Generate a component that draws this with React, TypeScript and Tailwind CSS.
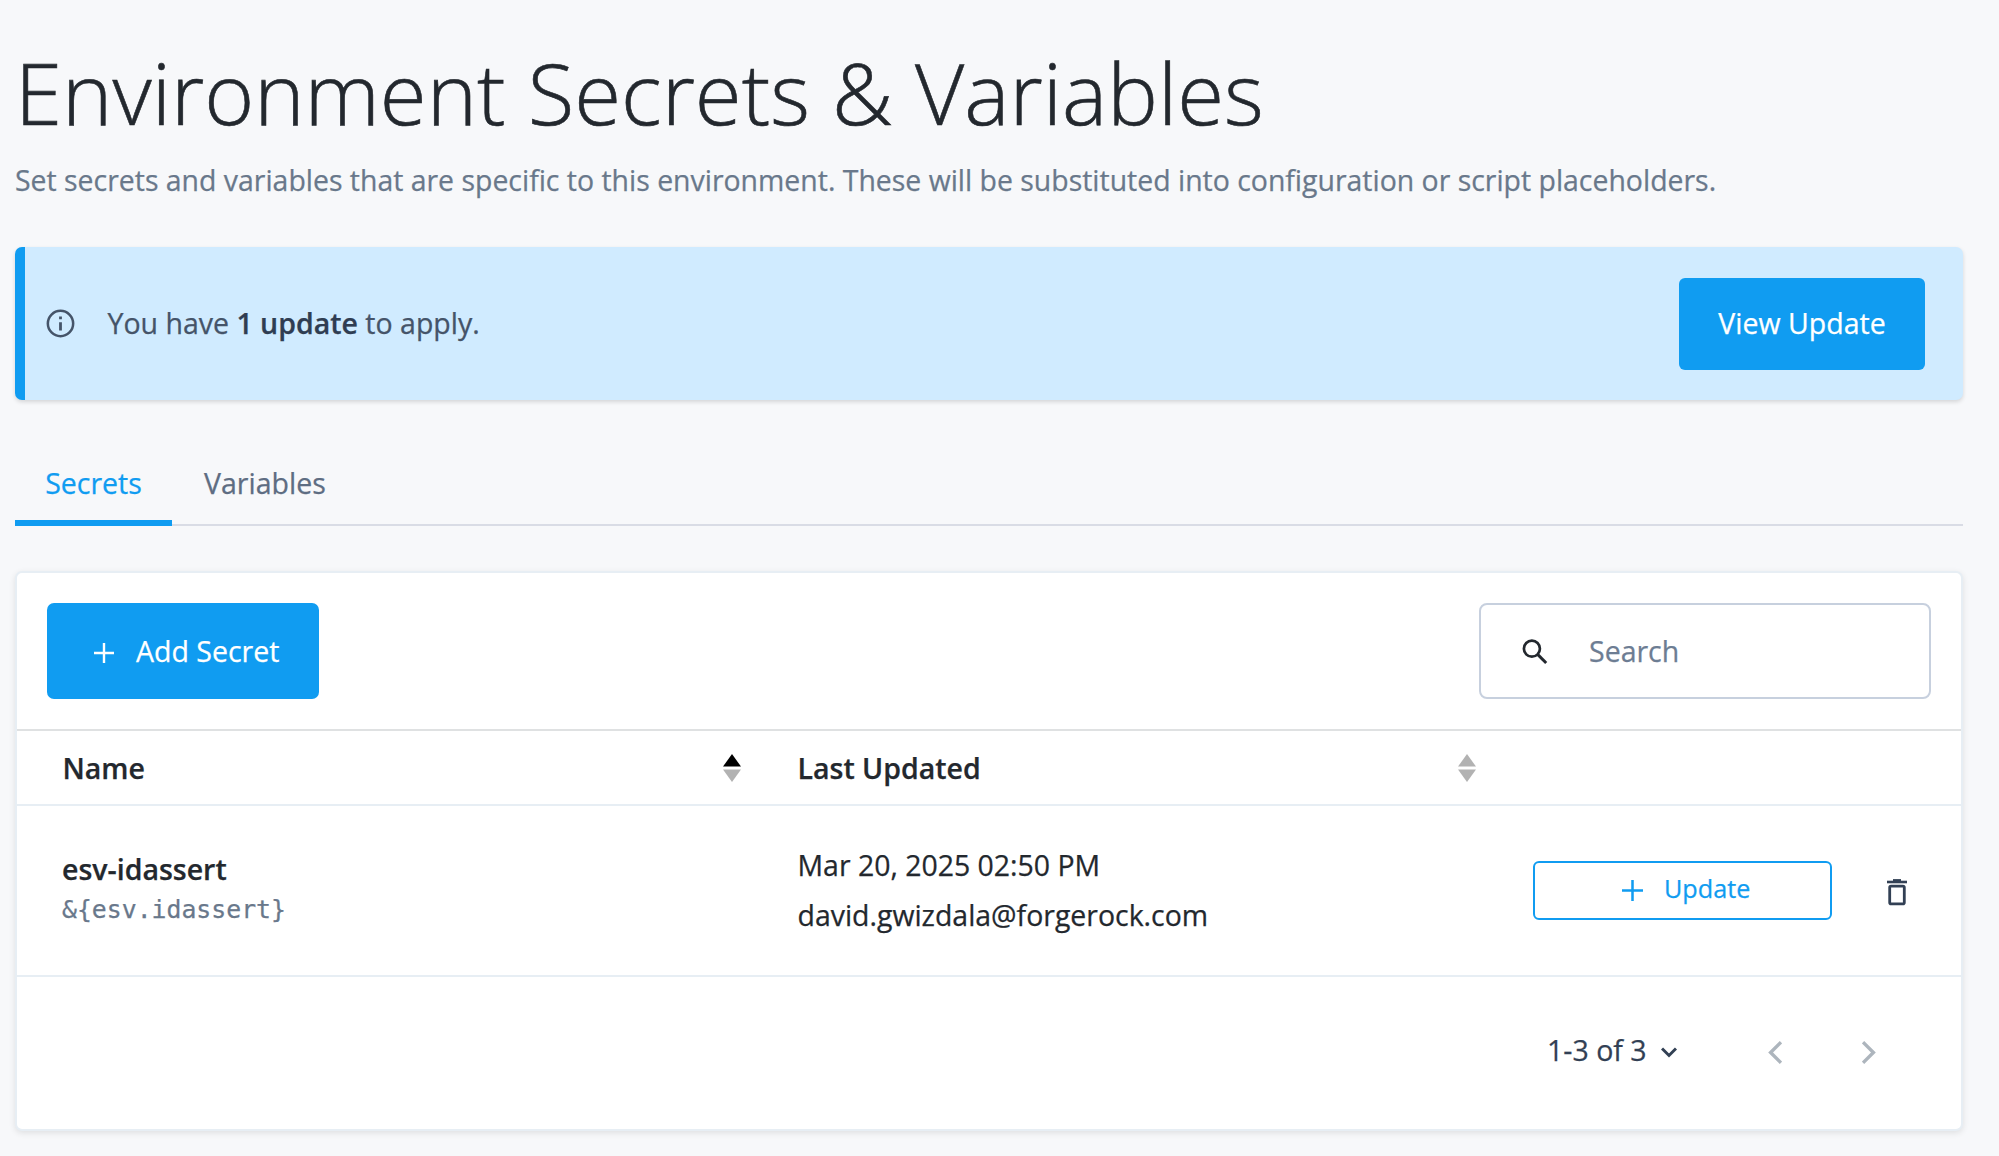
import React from "react";

function PlusIcon({ size }: { size: number }) {
  return (
    <svg width={size} height={size} viewBox="0 0 20 20" fill="none" stroke="currentColor" strokeWidth="2.4" className="shrink-0">
      <path d="M10 0v20M0 10h20" />
    </svg>
  );
}

function SortIcon({ active = false }: { active?: boolean }) {
  return (
    <svg width="18" height="28" viewBox="0 0 18 28" className="shrink-0">
      <path d="M9 0l9 12.6H0z" fill={active ? "#000000" : "#b2b2b2"} />
      <path d="M9 28l9-12.6H0z" fill="#b2b2b2" />
    </svg>
  );
}

function InfoIcon() {
  return (
    <svg width="29" height="29" viewBox="0 0 30 30" fill="none" stroke="currentColor" className="shrink-0">
      <circle cx="15" cy="15" r="13.1" strokeWidth="2.6" />
      <path d="M15 13.6v8.6M15 7.8v2.9" strokeWidth="2.9" />
    </svg>
  );
}

function SearchIcon() {
  return (
    <svg width="26" height="26" viewBox="0 0 26 26" fill="none" stroke="currentColor" className="shrink-0">
      <circle cx="9.9" cy="9.7" r="8" strokeWidth="2.7" />
      <path d="M15.6 15.4l8.6 8.6" strokeWidth="3" />
    </svg>
  );
}

function TrashIcon() {
  return (
    <svg width="20" height="27" viewBox="0 0 20 27" fill="none" stroke="currentColor" className="shrink-0">
      <path d="M0 3h20" strokeWidth="2.6" />
      <path d="M6 1.2h8" strokeWidth="2.2" />
      <rect x="2.7" y="7.2" width="14.6" height="17.6" rx="1.4" strokeWidth="2.8" />
    </svg>
  );
}

export default function App() {
  return (
    <div className="h-[1156px] w-[1999px] overflow-hidden bg-[#f7f8fa] pr-[36px] pl-[15px] font-['Open_Sans',sans-serif] text-[28.5px] text-[#23282e] [-webkit-text-stroke:0.25px]">
      <h1 className="mt-0 pt-[34px] text-[85.3px] leading-[116px] font-light whitespace-nowrap [-webkit-text-stroke:0.6px]">Environment Secrets &amp; Variables</h1>
      <p className="mt-2 text-[28.43px] leading-[44px] whitespace-nowrap text-[#69788b]">
        Set secrets and variables that are specific to this environment. These will be substituted into configuration or script placeholders.
      </p>

      <div className="mt-[45px] flex h-[153px] items-center overflow-hidden rounded-[7px] bg-[#d0ebff] shadow-[0_2px_4px_rgba(0,0,0,0.14)]">
        <div className="h-full w-[10px] bg-[#109cf1]" />
        <div className="ml-[21px] flex items-center text-[#455469]">
          <InfoIcon />
          <span className="ml-[32.5px] whitespace-pre">
            You have <b className="font-semibold text-[#2f3d52]">1 update</b> to apply.
          </span>
        </div>
        <button className="mr-[38px] ml-auto flex h-[92px] w-[246px] items-center justify-center rounded-[6px] bg-[#109cf1] text-white">View Update</button>
      </div>

      <nav className="mt-[40px] flex h-[86px] border-b-2 border-[#d9dce5]">
        <div className="-mb-[2px] flex w-[157px] items-center justify-center border-b-[6px] border-[#109cf1] pt-[7px] text-[#109cf1]">Secrets</div>
        <div className="-mb-[2px] flex items-center border-b-[6px] border-transparent px-8 pt-[7px] text-[#5e6d82]">Variables</div>
      </nav>

      <section className="mt-[45px] h-[560px] rounded-[7px] border-2 border-[#e7eef4] bg-white shadow-[0_2px_6px_rgba(0,0,0,0.10)]">
        <div className="flex h-[156px] items-center justify-between pr-[30px] pl-[30px]">
          <button className="flex h-24 w-[272px] items-center rounded-[7px] bg-[#109cf1] pl-[47px] text-white">
            <span className="mt-[3px]">
              <PlusIcon size={20} />
            </span>
            <span className="ml-[22px]">Add Secret</span>
          </button>
          <div className="flex h-24 w-[452px] items-center rounded-[8px] border-2 border-[#c7d0de] pl-[41px]">
            <span className="mt-[2px]">
              <SearchIcon />
            </span>
            <span className="ml-[41px] text-[#6d7d93]">Search</span>
          </div>
        </div>

        <div className="grid h-[77px] grid-cols-[735px_735px_1fr] items-center border-t-2 border-b-2 border-t-[#dfe1e2] border-b-[#e7eef4] pt-px font-semibold">
          <div className="flex items-center justify-between pr-[11px] pl-[45.5px]">
            Name <SortIcon active />
          </div>
          <div className="flex items-center justify-between pr-[11px] pl-[45.5px]">
            Last Updated <SortIcon />
          </div>
        </div>

        <div className="grid h-[171px] grid-cols-[735px_735px_1fr] items-center border-b-2 border-[#e7eef4]">
          <div className="pb-[4px] pl-[45px]">
            <div className="leading-[42px] font-semibold">esv-idassert</div>
            <div className="font-['DejaVu_Sans_Mono',monospace] text-[24.8px] leading-[40px] text-[#69788b]">&amp;{"{esv.idassert}"}</div>
          </div>
          <div className="pb-px pl-[45.5px] text-[28.45px] leading-[50px]">
            <div>Mar 20, 2025 02:50 PM</div>
            <div>david.gwizdala@forgerock.com</div>
          </div>
          <div className="flex items-center pl-[46px]">
            <button className="flex h-[59px] w-[299px] items-center rounded-[6px] border-2 border-[#109cf1] pl-[87px] text-[25.2px] text-[#109cf1]">
              <PlusIcon size={21} />
              <span className="-mt-[4px] ml-[21px]">Update</span>
            </button>
            <span className="mt-[4px] ml-[55px] text-[#324054]">
              <TrashIcon />
            </span>
          </div>
        </div>

        <div className="flex h-[150px] items-center pl-[1530px] text-[#324054]">
          <span className="-mt-[4px] whitespace-nowrap">1-3 of 3</span>
          <svg width="16" height="11" viewBox="0 0 16 11" fill="none" stroke="currentColor" strokeWidth="3" className="ml-[14px]">
            <path d="M1 1.5l7 7 7-7" />
          </svg>
          <svg width="14" height="23" viewBox="0 0 14 23" fill="none" stroke="#adb5bd" strokeWidth="3.4" className="ml-[91px]">
            <path d="M13 1.2L2.6 11.5 13 21.8" />
          </svg>
          <svg width="14" height="23" viewBox="0 0 14 23" fill="none" stroke="#adb5bd" strokeWidth="3.4" className="ml-[80px]">
            <path d="M1 1.2l10.4 10.3L1 21.8" />
          </svg>
        </div>
      </section>
    </div>
  );
}
